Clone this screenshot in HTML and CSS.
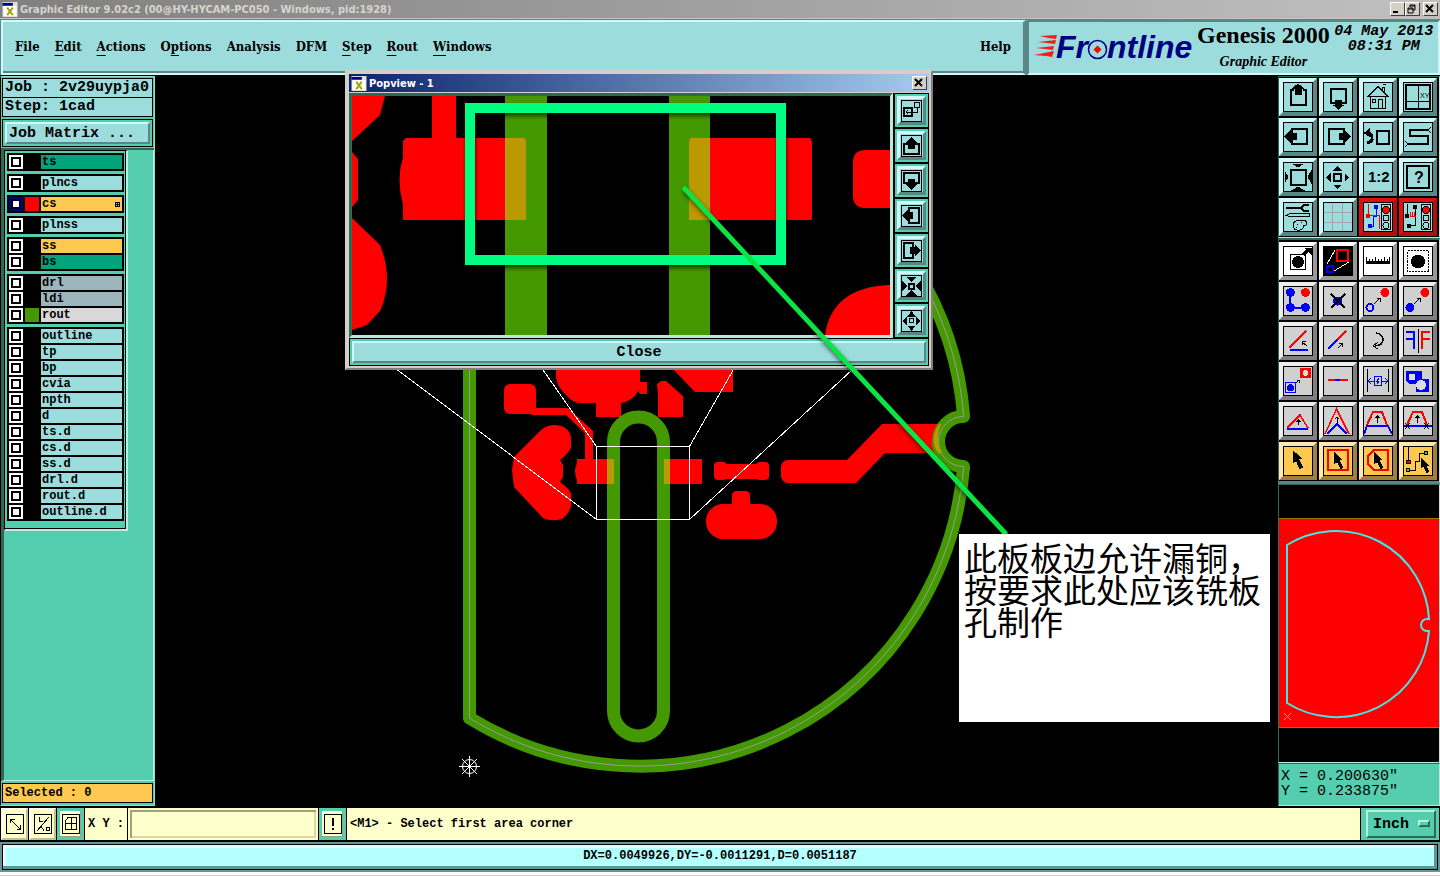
FILE: index.html
```html
<!doctype html>
<html lang="zh">
<head>
	<meta charset="UTF-8">
	<title>Graphic Editor</title>
	<link rel="stylesheet" href="styles.css">
</head>
<body>
	<!-- window title -->
	<div class="titlebar">
		<svg class="win_icon" viewBox="0 0 16 16"><rect width="16" height="16" fill="#ddd"/><rect x="1" y="4" width="14" height="11" fill="#fff"/><rect y="1" width="11" height="3" fill="#008"/><path d="M5 6l6 8M11 6l-6 8" stroke="#a8a000" stroke-width="2"/></svg>
		<span class="title_text">Graphic Editor 9.02c2 (00@HY-HYCAM-PC050 - Windows, pid:1928)</span>
		<button class="win_btn" aria-label="Minimize"><svg viewBox="0 0 11 10"><path d="M2 8h5" stroke="#000" stroke-width="2"/></svg></button>
		<button class="win_btn" aria-label="Restore"><svg viewBox="0 0 11 10"><path d="M4 3V1h5v5H7M4 2h5M2 4h5v5H2zM2 5h5" fill="none" stroke="#000"/></svg></button>
		<button class="win_btn win_close" aria-label="Close window"><svg viewBox="0 0 11 10"><path d="M2 1l7 7M9 1l-7 7" stroke="#000" stroke-width="2"/></svg></button>
	</div>

	<header class="header">
		<nav class="menubar">
			<button><u>F</u>ile</button>
			<button><u>E</u>dit</button>
			<button><u>A</u>ctions</button>
			<button>O<u>p</u>tions</button>
			<button>Analysis</button>
			<button>DFM</button>
			<button><u>S</u>tep</button>
			<button><u>R</u>out</button>
			<button><u>W</u>indows</button>
			<button class="help">Help</button>
		</nav>
		<div class="brand">
			<svg class="logo" viewBox="1031 30 162 34" width="162" height="34">
				<g fill="#f02018"><path d="M1038 36l17-1-1 4-8-1zM1036 42l18-2-1 4-8-1zM1034 48l18-2-1 4-8-1zM1032 55l20-4-2 6-6-1z"/></g>
				<g class="logo_text">
					<text x="1054" y="58">Fr</text>
					<text x="1105" y="58">ntline</text>
				</g>
				<circle cx="1095.500" cy="49.500" r="9" fill="none" stroke="#000080" stroke-width="1.500"/>
				<path d="M1095.500 45.500l4 4-4 4-4-4z" fill="#f00"/>
			</svg>
			<div class="product">
				<div class="product_name">Genesis 2000</div>
				<div class="product_sub">Graphic Editor</div>
			</div>
			<div class="clock">04 May 2013<br>08:31 PM</div>
		</div>
	</header>

	<main class="workspace">
		<aside class="sidebar">
			<div class="job_info">
				<div class="job_line">Job : 2v29uypja0</div>
				<div class="job_line">Step: 1cad</div>
				<div class="matrix_wrap"><button class="matrix">Job Matrix ...</button></div>
			</div>
			<div class="layer_area">
				<div class="layers">
					<div class="group">
						<label class="row"><input type="checkbox"><i></i><span class="green">ts</span></label>
					</div>
					<div class="group">
						<label class="row"><input type="checkbox"><i></i><span>plncs</span></label>
					</div>
					<div class="group">
						<label class="row"><input type="checkbox" checked><i class="c_red"></i><span class="orange">cs<b></b></span></label>
					</div>
					<div class="group">
						<label class="row"><input type="checkbox"><i></i><span>plnss</span></label>
					</div>
					<div class="group">
						<label class="row"><input type="checkbox"><i></i><span class="orange">ss</span></label>
						<label class="row"><input type="checkbox"><i></i><span class="green">bs</span></label>
					</div>
					<div class="group">
						<label class="row"><input type="checkbox"><i></i><span class="steel">drl</span></label>
						<label class="row"><input type="checkbox"><i></i><span class="steel">ldi</span></label>
						<label class="row"><input type="checkbox"><i class="c_green"></i><span class="gray">rout</span></label>
					</div>
					<div class="group">
						<label class="row"><input type="checkbox"><i></i><span>outline</span></label>
						<label class="row"><input type="checkbox"><i></i><span>tp</span></label>
						<label class="row"><input type="checkbox"><i></i><span>bp</span></label>
						<label class="row"><input type="checkbox"><i></i><span>cvia</span></label>
						<label class="row"><input type="checkbox"><i></i><span>npth</span></label>
						<label class="row"><input type="checkbox"><i></i><span>d</span></label>
						<label class="row"><input type="checkbox"><i></i><span>ts.d</span></label>
						<label class="row"><input type="checkbox"><i></i><span>cs.d</span></label>
						<label class="row"><input type="checkbox"><i></i><span>ss.d</span></label>
						<label class="row"><input type="checkbox"><i></i><span>drl.d</span></label>
						<label class="row"><input type="checkbox"><i></i><span>rout.d</span></label>
						<label class="row"><input type="checkbox"><i></i><span>outline.d</span></label>
					</div>
				</div>
			</div>
			<div class="selected_wrap"><div class="selected">Selected : 0</div></div>
		</aside>

		<section class="canvas">
			<!-- board drawing -->
			<svg class="board" viewBox="155 76 1121 730" width="1121" height="730">
				<g fill="#f00">
					<rect x="504" y="384" width="32" height="30" rx="6"/>
					<path d="M531 408h37l25 23v29h-8v-27l-19-18h-35z"/>
					<path d="M556 366v12q2 10 10 17 7 8 14 8h16v14h25v-14q12-2 17-12l2 3h7v-12h-7v-16z"/>
					<path d="M657 384l4-3h5l17 15v21h-25v-22z"/>
					<path d="M672 368l23 24h38v-24z"/>
					<path d="M512 470l2-13 26-26q6-6 14-6 14 0 17 12v10q-1 5-11 13l3 5v12l-3 5q10 7 11 12v12q-2 8-9 13-11 3-19-1l-29-31z"/>
					<path d="M577 459h37v25h-37v-4q-4-9 0-17z"/>
					<path d="M664 459h38v25h-38z"/>
					<path d="M714 466q0-4 4-4h6l3 2h29l3-2h6q4 0 4 4v10q0 4-4 4h-6l-3-1h-29l-3 1h-6q-4 0-4-4z"/>
					<path d="M732 506v-10q0-5 5-5h8q5 0 5 5v10z"/>
					<rect x="706" y="504" width="71" height="35" rx="17"/>
					<path d="M781 467q0-6 7-7h59l35-36h58v29h-55l-29 30h-69q-6-2-6-7z"/>
				</g>
				<g fill="none" stroke="#490" stroke-width="13" stroke-linejoin="round">
					<path d="M469.500 164V718A325 325 0 0 0 963.500 468V466.500A25 25 0 0 1 963.500 416.500V415A325 325 0 0 0 469.500 164z"/>
					<path d="M613.500 442a25 25 0 0 1 50 0V711a25 25 0 0 1-50 0z"/>
				</g>
				<path d="M469.500 164V718A325 325 0 0 0 963.500 468V466.500A25 25 0 0 1 963.500 416.500V415A325 325 0 0 0 469.500 164z" fill="none" stroke="#999"/>
				<g fill="#b90">
					<path d="M607 459h7v25h-7zM664 459h6v25h-6zM939 424q-11 16 0 30l3-2q-8-12-1-28z"/>
				</g>
				<g fill="none" stroke="#fff" shape-rendering="crispEdges">
					<path d="M596.500 446.500h93v73h-93zM351 335L596.500 519.500M351 95L596.500 446.500M890 95L689.500 446.500M890 335L689.500 519.500"/>
				</g>
				<g fill="none" stroke="#fff"><circle cx="469.500" cy="766.500" r="7"/><path d="M459 766.500h21M469.500 756v21M462 759l15 15M477 759l-15 15"/></g>
			</svg>

			<!-- Popview window -->
			<div class="popview">
				<div class="pop_title">
					<svg class="win_icon" viewBox="0 0 16 16"><rect width="16" height="16" fill="#ddd"/><rect x="1" y="4" width="14" height="11" fill="#fff"/><rect y="1" width="11" height="3" fill="#008"/><path d="M5 6l6 8M11 6l-6 8" stroke="#a8a000" stroke-width="2"/></svg>
					<span>Popview - 1</span>
					<button class="win_btn win_close" aria-label="Close popview"><svg viewBox="0 0 11 10"><path d="M2 1l7 7M9 1l-7 7" stroke="#000" stroke-width="2"/></svg></button>
				</div>
				<div class="pop_main">
					<div class="pop_view">
						<svg viewBox="352 96 538 239" width="538" height="239">
							<rect x="352" y="96" width="538" height="239"/>
							<g fill="#f00">
								<path d="M352 96h33l-5 19-28 26zM432 96h24v50h-24z"/>
								<path d="M403 141l3-3h120v82H403v-16q-7-24 0-47zM352 152l6 7v41l-6 7zM352 218l28 27q14 35 0 66l-13 14-15 5z"/>
								<path d="M689 138h121l2 3v79H689zM890 150h-26q-11 1-11 12v34q0 11 11 12h26zM825 335q7-48 65-50v50z"/>
							</g>
							<path d="M505 96h42v239h-42zM669 96h41v239h-41z" fill="#490"/>
							<path d="M505 138h19l2 3v79h-21zM710 138h-19l-2 3v79h21z" fill="#b90"/>
						</svg>
					</div>
					<div class="pop_tools">
						<button aria-label="Zoom area"><svg viewBox="0 0 21 22"><path d="M3 8h8v8H3z" stroke-width="2"/><path d="M13.500 2.500h5v5h-5zM12 12.500h4v-5M5 12.500h5M7 10l-2 2 2 2"/></svg></button>
						<button aria-label="Pan up"><svg viewBox="0 0 21 22"><path d="M7 9H3v10h15V9h-4" stroke-width="2"/><path d="M10.500 3l5 5h-2v5H7V8H5.500z" fill="#000"/></svg></button>
						<button aria-label="Pan down"><svg viewBox="0 0 21 22"><path d="M7 13H3V3h15v10h-4" stroke-width="2"/><path d="M10.500 19l5-5h-2V9H7v5H5.500z" fill="#000"/></svg></button>
						<button aria-label="Pan left"><svg viewBox="0 0 21 22"><path d="M8 7V3h10v15H8v-4" stroke-width="2"/><path d="M2 10.500l5-5v2h4v6H7v2z" fill="#000"/></svg></button>
						<button aria-label="Pan right"><svg viewBox="0 0 21 22"><path d="M12 7V3H3v15h9v-4" stroke-width="2"/><path d="M19 10.500l-5-5v2H9v6h5v2z" fill="#000"/></svg></button>
						<button aria-label="Zoom in"><svg viewBox="0 0 21 22"><path d="M8 9h5v5H8z" stroke-width="2"/><path d="M6 2h9l-4.500 4zM6 20h9l-4.500-4zM1.500 6.500v9l4-4.500zM19.500 6.500v9l-4-4.500z" fill="#000"/></svg></button>
						<button aria-label="Zoom out"><svg viewBox="0 0 21 22"><path d="M8.500 8.500h4v4h-4z"/><path d="M7 6h7l-3.500-4zM7 16h7l-3.500 4zM5.500 7.500v7L2 11zM15.500 7.500v7L19 11z" fill="#000"/></svg></button>
					</div>
				</div>
				<div class="pop_foot"><button class="pop_close">Close</button></div>
			</div>

			<!-- annotation over everything -->
			<svg class="marks" viewBox="155 76 1121 730" width="1121" height="730">
				<rect x="470" y="108" width="311" height="152" fill="none" stroke="#00ff80" stroke-width="10"/>
				<path d="M685 189L1005 533" stroke="#0be544" stroke-width="5" stroke-linecap="round"/>
			</svg>
			<div class="note">此板板边允许漏铜，按要求此处应该铣板孔制作</div>
		</section>

		<aside class="tools">
			<div class="toolbox cyan">
				<button aria-label="Pan up"><svg viewBox="0 0 30 30"><path d="M11 8H8v15h15V8h-3" stroke-width="2"/><path d="M15 2l5 4h-2v6h-6V6h-2z" fill="#000"/></svg></button>
				<button aria-label="Pan down"><svg viewBox="0 0 30 30"><path d="M12 21H8V7h15v14h-4" stroke-width="2"/><path d="M15.500 27l5-4h-2v-5h-6v5h-2z" fill="#000"/></svg></button>
				<button aria-label="Home"><svg viewBox="0 0 30 30"><path d="M5.500 14.500h19l-9.500-10z" stroke-width="1.500"/><path d="M7.500 14.500v12h15v-12M15.500 26V17.500h4V26M9.500 17.500h3v3h-3zM19.500 8V5.500h2V10M20 3l3-1"/></svg></button>
				<button aria-label="Coordinates"><svg viewBox="0 0 30 30"><path d="M3 3h24v24H3z" stroke-width="2"/><path d="M15.500 4v22M4 19.500h22"/><text x="17" y="16" class="tiny">XY</text></svg></button>
				<button aria-label="Pan left"><svg viewBox="0 0 30 30"><path d="M9 11V7h15v15H9v-4" stroke-width="2"/><path d="M2 14.500l5-5v2h6v6H7v2z" fill="#000"/></svg></button>
				<button aria-label="Pan right"><svg viewBox="0 0 30 30"><path d="M21 11V7H6v15h15v-4" stroke-width="2"/><path d="M27 14.500l-5-5v2h-6v6h6v2z" fill="#000"/></svg></button>
				<button aria-label="Previous view"><svg viewBox="0 0 30 30"><path d="M14 9h12v13H14z" stroke-width="2"/><path d="M4 21q6-1 5-6-1-4-4-4" stroke-width="3"/><path d="M1.500 11L6 7.500V14z" fill="#000"/></svg></button>
				<button aria-label="Snake"><svg viewBox="0 0 30 30"><path d="M25 8H7v6h18v8H5" stroke-width="2"/><path d="M25 8l3-3M25 8l3 3M5 22l-3-3M5 22l-3 3"/></svg></button>
				<button aria-label="Zoom in"><svg viewBox="0 0 30 30"><path d="M8 8h15v15H8z" stroke-width="2"/><path d="M10 2h10l-5 3zM10 28h10l-5-3zM2 10v10l3-5zM28 10v10l-3-5z" fill="#000"/></svg></button>
				<button aria-label="Zoom out"><svg viewBox="0 0 30 30"><path d="M11 12h7v7h-7z" stroke-width="2"/><path d="M11.500 8h6l-3-3.500zM11.500 23h6l-3 3.500zM7 12v7l-3.500-3.500zM22 12v7l3.500-3.500z" fill="#000"/></svg></button>
				<button aria-label="Scale"><svg viewBox="0 0 30 30"><text x="5" y="20" class="ratio">1:2</text></svg></button>
				<button aria-label="Query"><svg viewBox="0 0 30 30"><path d="M4 4h22v22H4z" stroke-width="2"/><text x="11" y="21" class="ask">?</text></svg></button>
				<button aria-label="Setup"><svg viewBox="0 0 30 30"><path d="M3 6h15" stroke-width="2"/><path d="M26 3h-5l-3 3 3 3h5" stroke-width="2"/><path d="M3 13.500l4-2h19v3H7z"/><path d="M10 23q1-5 8-5 6 0 6 4-1 2-4 2 1 3-3 4-7 1-7-5zM14 22h1M18 20h1M13 25h1"/></svg></button>
				<button aria-label="Grid"><svg viewBox="0 0 30 30"><path d="M9.500 1v28M19.500 1v28M1 10.500h28M1 20.500h28" stroke="#a5a5a5"/></svg></button>
				<button class="red_frame" aria-label="Net on"><svg viewBox="0 0 30 30"><path d="M5.500 2v11.500h11M16.500 13v14" stroke="#f00"/><path d="M13.500 5v9h-3v10H7" stroke="#00f"/><circle cx="5" cy="14" r="2.500" fill="#f00" stroke="none"/><circle cx="13" cy="5" r="2.500" fill="#00f" stroke="none"/><circle cx="7" cy="24" r="2.500" fill="#00f" stroke="none"/><path d="M18.500 2.500h9v25h-9z"/><circle cx="23" cy="8" r="3.500" fill="#f00"/><circle cx="23" cy="16" r="3"/><circle cx="23" cy="23.500" r="3"/></svg></button>
				<button class="red_frame" aria-label="Net off"><svg viewBox="0 0 30 30"><path d="M4.500 2v11.500M12.500 5v18.500H7"/><path d="M7.500 14v-4M9.500 14v-4M11.500 14v-4M7 14h6" stroke="#f00"/><circle cx="4" cy="14" r="2.500" fill="#000" stroke="none"/><circle cx="12" cy="5" r="2.500" fill="#000" stroke="none"/><circle cx="6" cy="24" r="2.500" fill="#000" stroke="none"/><path d="M18.500 2.500h9v25h-9z"/><circle cx="23" cy="8" r="3.500" fill="#f00"/><circle cx="23" cy="16" r="3"/><circle cx="23" cy="23.500" r="3"/></svg></button>
			</div>
			<div class="toolbox silver">
				<button class="white" aria-label="Feature"><svg viewBox="0 0 30 30"><path d="M7.500 8.500h15v15h-15z"/><circle cx="15" cy="16" r="6" fill="#000" stroke="none"/><path d="M20 9l5-5" stroke-width="3"/><path d="M22 2h6v6z" fill="#000"/></svg></button>
				<button class="white" aria-label="Popview"><svg viewBox="0 0 30 30"><rect x="1" y="1" width="28" height="28" fill="#000"/><path d="M14 4h11v11H14z" stroke="#f00" stroke-width="2"/><path d="M4 20h6v6H4z" stroke="#00f" stroke-width="2"/><path d="M12 4L4 18M26 16l-15 9" stroke="#fff"/></svg></button>
				<button class="white" aria-label="Measure"><svg viewBox="0 0 30 30"><path d="M3 16.500h24" stroke-width="3"/><path d="M3.500 11v5M6.500 13v3M9.500 13v3M12.500 11v5M15.500 13v3M18.500 13v3M21.500 11v5M24.500 13v3M26.500 11v5"/></svg></button>
				<button class="white" aria-label="Select feature"><svg viewBox="0 0 30 30"><path d="M4.500 4.500h21v21h-21z" stroke-dasharray="2 1"/><circle cx="15" cy="15.500" r="7" fill="#000" stroke="none"/></svg></button>
				<button aria-label="Add pads"><svg viewBox="0 0 30 30"><path d="M7 6.500V22h15" stroke="#00f" stroke-width="2"/><g fill="#00f" stroke="none"><circle cx="7.500" cy="6.500" r="4.500"/><circle cx="7.500" cy="21.500" r="4.500"/><circle cx="22.500" cy="21.500" r="4.500"/></g><circle cx="22.500" cy="6.500" r="4.500" fill="#f00" stroke="none"/></svg></button>
				<button aria-label="Delete"><svg viewBox="0 0 30 30"><circle cx="14.500" cy="15" r="4.500" fill="#00f" stroke="none"/><path d="M8 8l14 14M22 8L8 22" stroke-width="2"/></svg></button>
				<button aria-label="Copy"><svg viewBox="0 0 30 30"><circle cx="7" cy="21.500" r="3.500" stroke="#00f" stroke-width="2"/><circle cx="22" cy="6.500" r="4.500" fill="#f00" stroke="none"/><path d="M11 18l6-6M14 12.500h3.500v3.500"/></svg></button>
				<button aria-label="Move"><svg viewBox="0 0 30 30"><circle cx="7" cy="21.500" r="4.500" fill="#00f" stroke="none"/><circle cx="22" cy="6.500" r="4.500" fill="#f00" stroke="none"/><path d="M11 18l6-6M14 12.500h3.500v3.500"/></svg></button>
				<button aria-label="Rotate"><svg viewBox="0 0 30 30"><path d="M23 5L6 22" stroke="#f00" stroke-width="2"/><path d="M7 24h18" stroke="#00f" stroke-width="2"/><path d="M24 20l-5-4M19.500 19v-3.500h3.500"/></svg></button>
				<button aria-label="Extend line"><svg viewBox="0 0 30 30"><path d="M23 5l-9 9" stroke="#f00" stroke-width="2"/><path d="M14 14l-9 9" stroke="#00f" stroke-width="2"/><path d="M15 22l4-4M16 17.500h3.500v3.500"/></svg></button>
				<button aria-label="Turn"><svg viewBox="0 0 30 30"><path d="M13 7q7 1 7 7 0 5-8 6" stroke-width="1.500"/><path d="M15 16l-5 4 5 3"/></svg></button>
				<button aria-label="Mirror"><svg viewBox="0 0 30 30"><path d="M3 6h8v17M3 13h8" stroke="#00f" stroke-width="2"/><path d="M27 6h-8v17M27 13h-8" stroke="#f00" stroke-width="2"/><path d="M15.500 3v24"/></svg></button>
				<button aria-label="Substitute"><svg viewBox="0 0 30 30"><rect x="17" y="2" width="11" height="10" fill="#f00" stroke="none"/><circle cx="22.500" cy="7" r="3" fill="#ddd" stroke="none"/><path d="M2.500 16.500h10v10h-10z" stroke="#00f"/><circle cx="7.500" cy="21.500" r="3.500" fill="#00f" stroke="none"/><path d="M13 17l3-3M14 14.500h2.500v2.500"/></svg></button>
				<button aria-label="Join"><svg viewBox="0 0 30 30"><path d="M5 14h20" stroke="#f00" stroke-width="2"/><path d="M12 14h5" stroke="#00f" stroke-width="2"/></svg></button>
				<button aria-label="Spacing"><svg viewBox="0 0 30 30"><path d="M4.500 3v23M25.500 3v23"/><path d="M11.500 10.500h7v9h-7zM6 15.500h5M19 15.500h5M8 12l-3 3 3 3M22 12l3 3-3 3M16 12l-2 3h2l-2 3" stroke="#00f"/></svg></button>
				<button aria-label="Contourize"><svg viewBox="0 0 30 30"><path d="M3 5h16v8h7v13H13v-8H6l-3-3z" fill="#00f" stroke="none"/><circle cx="9" cy="11" r="3.500" fill="#ddd" stroke="none"/><circle cx="18" cy="19" r="5" fill="#ddd" stroke="none"/></svg></button>
				<button aria-label="Stretch one"><svg viewBox="0 0 30 30"><path d="M4 22L17 9l8 13" stroke="#f00" stroke-width="1.500"/><path d="M4 23h21" stroke="#00f" stroke-width="2"/><path d="M15.500 19v-5M13.500 16l2-2 2 2"/></svg></button>
				<button aria-label="Stretch two"><svg viewBox="0 0 30 30"><path d="M2 28L13.500 3 26 28" stroke="#f00" stroke-width="1.500"/><path d="M4 28l10-10 10 10" stroke="#00f" stroke-width="2"/><path d="M14.500 17v-6M12 13l2-2 2 2"/></svg></button>
				<button aria-label="Stretch three"><svg viewBox="0 0 30 30"><path d="M4 19L10 6h9l5 13" stroke="#f00" stroke-width="2"/><path d="M1 28l3-8h21l4 8" stroke="#00f" stroke-width="2"/><path d="M14.500 17v-7M12.500 12l2-2 2 2"/></svg></button>
				<button aria-label="Stretch four"><svg viewBox="0 0 30 30"><path d="M4 19L10 6h9l5 13" stroke="#f00" stroke-width="2"/><path d="M1 20h28" stroke="#00f" stroke-width="2"/><path d="M14.500 17v-7M12.500 12l2-2 2 2M2 17l5 6M7 17l-5 6M21 17l5 6M26 17l-5 6"/></svg></button>
				<button class="gold" aria-label="Select"><svg viewBox="0 0 30 30"><path d="M10.500 5.500l8 7h-3l4 9-3 1-3-8-3 2z" fill="#000"/></svg></button>
				<button class="gold" aria-label="Select by frame"><svg viewBox="0 0 30 30"><path d="M5 4h20v20H5z" stroke="#f00" stroke-width="2"/><path d="M11.500 6.500l7 7h-3l4 8-2 1-3-7-3 2z" fill="#000"/></svg></button>
				<button class="gold" aria-label="Select by polygon"><svg viewBox="0 0 30 30"><path d="M11 4h14v20H11l-6-6V10z" stroke="#f00" stroke-width="2"/><path d="M11.500 6.500l7 7h-3l4 8-2 1-3-7-3 2z" fill="#000"/></svg></button>
				<button class="gold" aria-label="Select net"><svg viewBox="0 0 30 30"><path d="M5.500 1v13M5 24.500h7.500v-9h4v-8H23"/><circle cx="5.500" cy="16" r="2" fill="#f00"/><circle cx="5" cy="24" r="2" fill="#0f0"/><circle cx="23" cy="7" r="2" fill="#0f0"/><path d="M18.500 12.500l7 7h-3l3 6-2 1-3-7-2 2z" fill="#000"/></svg></button>
			</div>
			<div class="overview">
				<svg viewBox="1279 484 160 277" width="160" height="277">
					<rect x="1279" y="484" width="160" height="277"/>
					<rect x="1278.500" y="517.500" width="161" height="209" fill="#f00" stroke="#970"/>
					<path d="M1287 544V702A93 93 0 0 0 1429 630h-2a6 6 0 0 1 0-12h2A93 93 0 0 0 1287 544z" fill="none" stroke="#40e8e8" stroke-width="2"/>
					<path d="M1284 712l7 7M1291 712l-7 7" stroke="#d99"/>
				</svg>
			</div>
			<div class="coords">X = 0.200630"<br>Y = 0.233875"</div>
		</aside>
	</main>

	<form class="entry">
		<button type="button" class="mini" aria-label="Angle"><svg viewBox="0 0 18 20"><path d="M.500.500h17v19H.500zM4 5l10 10M4.500 9V5.500h4M14.500 11v4.500h-4"/></svg></button>
		<button type="button" class="mini" aria-label="Ortho"><svg viewBox="0 0 18 20"><path d="M.500.500h17v19H.500zM3 17L15 3M5.500 3v4h3M7 12l3 5M12.500 13.500h3v3h-3z"/></svg></button>
		<button type="button" class="mini teal" aria-label="Snap"><svg viewBox="0 0 18 20"><path d="M.500.500h17v19H.500zM6 3.500h8.500v12h-11V7zM9.500 4v12M3 9.500h12"/></svg></button>
		<label for="xy">X Y :</label>
		<input id="xy" type="text">
		<button type="button" class="mini teal" aria-label="Alert"><svg viewBox="0 0 18 20"><path d="M.500.500h17v19H.500z"/><path d="M9 4v8M9 14v2" stroke-width="2"/></svg></button>
		<div class="message">&lt;M1&gt; - Select first area corner</div>
		<div class="units">
			<select aria-label="Units"><option>Inch</option><option>MM</option></select>
		</div>
	</form>
	<footer class="status"><div>DX=0.0049926,DY=-0.0011291,D=0.0051187</div></footer>
</body>
</html>
```
FILE: styles.css
```css
*{box-sizing:border-box}
body{
	margin:0;
	min-height:100vh;
	display:flex;
	flex-direction:column;
	background:#d4d0c8;
	color:#000;
	font:bold 12px "Liberation Mono",monospace;
}
button{
	margin:0;
	padding:0;
	border:0;
	background:none;
	color:inherit;
	font:inherit;
}
svg{display:block}

/* 标题栏 */
.titlebar{
	height:19px;
	display:flex;
	align-items:center;
	padding:0 2px;
	background:linear-gradient(90deg,#808080,#c0c0c0);
	border-bottom:1px solid #c8c4bc;
	color:#d8d4cc;
}
.title_text,.pop_title span{
	flex:1;
	padding-left:2px;
	font:bold 11px "DejaVu Sans Condensed","DejaVu Sans",sans-serif;
}
.win_icon{width:16px;height:15px}
.win_btn{
	width:15px;
	height:14px;
	background:#d4d0c8;
	border:1px solid;
	border-color:#fff #404040 #404040 #fff;
}
.win_btn svg{width:11px;height:10px}
.win_close{margin-left:3px}

/* 菜单 */
.header{
	height:57px;
	display:flex;
	background:#5a8686;
	border-bottom:1px solid #000;
	padding:1px 0 0 1px;
}
.menubar,.brand{
	background:#9cdcdc;
	border:2px solid;
	border-color:#d0fafa #5a8686 #d0fafa #d0fafa;
}
.menubar{
	flex:1;
	display:flex;
	align-items:center;
	gap:15px;
	padding:0 12px 2px;
	border-right-width:3px;
	box-shadow:inset 0 -2px #5a8686;
}
.menubar button{font:bold 13px "DejaVu Serif Condensed","DejaVu Serif",serif}
.menubar u{text-underline-offset:4px}
.menubar .help{margin-left:auto}
.brand{
	width:413px;
	margin-left:1px;
	display:flex;
	align-items:flex-start;
	border-color:#5a8686 #d0fafa #d0fafa #5a8686;
}
.logo{margin:8px 2px 0 4px}
.product{text-align:center}
.logo_text{
	fill:#000080;
	font:italic bold 32px "Liberation Sans",sans-serif;
}
.product_name{font:bold 24px/27px "Liberation Serif",serif}
.product_sub{font:italic bold 14px/25px "Liberation Serif",serif}
.clock{
	flex:1;
	padding-top:2px;
	text-align:center;
	font:italic bold 15px/15px "Liberation Mono",monospace;
	white-space:nowrap;
}

/* 主区域 */
.workspace{
	flex:1;
	display:grid;
	grid-template-columns:155px minmax(0,1fr) 164px;
	background:#000;
}
.sidebar{
	display:flex;
	flex-direction:column;
	background:#55ceb0;
	border:1px solid #8ce0cc;
	border-left-color:#000;
	margin-bottom:1px;
}
.job_info{
	padding:1px;
	font-size:15px;
	border-bottom:2px solid #306858;
}
.job_line,.matrix_wrap{
	background:#9cdcdc;
	border:1px solid #000;
}
.job_line{
	height:20px;
	line-height:17px;
	padding-left:2px;
	white-space:nowrap;
}
.job_line + .job_line{margin-top:-1px}
.matrix_wrap{
	margin-top:2px;
	padding:2px;
	background:#55ceb0;
}
.matrix{
	display:block;
	width:100%;
	height:22px;
	padding-left:2px;
	text-align:left;
	background:#9cdcdc;
	border:2px solid;
	border-color:#d0fafa #5a8686 #5a8686 #d0fafa;
}
.layer_area{
	flex:1;
	border-left:3px solid #306858;
	border-right:1px solid #b8f0e0;
	border-bottom:1px solid #b8f0e0;
}
.layers{
	width:124px;
	height:381px;
	padding:2px;
	border:1px solid #000;
	border-width:1px 2px 2px 1px;
	border-color:#000 #b8f0e0 #b8f0e0 #000;
	box-shadow:inset -1px -1px #000;
	display:flex;
	flex-direction:column;
	gap:3px;
}
.group{
	width:117px;
	padding:2px;
	background:#000;
	display:flex;
	flex-direction:column;
	gap:2px;
}
.row{
	height:14px;
	display:flex;
	gap:2px;
}
.row input{
	appearance:none;
	width:14px;
	height:14px;
	margin:0;
	background:#fff;
	border:2px solid #fff;
	box-shadow:inset 0 0 0 2px #000;
}
.row input:checked{
	border-color:#008;
	box-shadow:inset 0 0 0 2px #002;
}
.row i{width:14px}
.row span{
	flex:1;
	display:flex;
	align-items:center;
	justify-content:space-between;
	padding:0 2px 0 1px;
	line-height:13px;
	background:#9cdcdc;
}
.row .green{background:#00a47c}
.row .orange{background:#ffc850}
.row .steel{background:#9cb4bc}
.row .gray{background:#d8d8d8}
.row .c_red{background:#f00}
.row .c_green{background:#490}
/* 层名后的小方格 */
.row b{
	width:5px;
	height:5px;
	border:1px solid #000;
	background:linear-gradient(#000,#000) 1px 0/1px 3px no-repeat,linear-gradient(#000,#000) 0 1px/3px 1px no-repeat;
}
.selected_wrap{padding:2px 1px}
.selected{
	height:20px;
	padding-left:2px;
	line-height:18px;
	background:#ffc850;
	border:1px solid #000;
}

/* 画布 */
.canvas{
	position:relative;
	overflow:visible;
	background:#000;
}
.marks{
	position:absolute;
	left:0;
	top:0;
	pointer-events:none;
	filter:drop-shadow(1px 3px 2px rgba(0,0,0,.6));
}
.note{
	position:absolute;
	left:804px;
	top:458px;
	width:311px;
	height:188px;
	padding:7px 5px;
	background:#fff;
	font:33px/32px "Noto Sans CJK SC",sans-serif;
	word-break:break-all;
}

/* 弹出窗口 */
.popview{
	position:absolute;
	left:190px;
	top:-6px;
	width:588px;
	padding:2px;
	background:#000;
	border:2px solid;
	border-color:#d4d0c8 #808080 #808080 #d4d0c8;
	box-shadow:inset 0 0 0 2px #d4d0c8;
}
.pop_title{
	height:19px;
	display:flex;
	align-items:center;
	padding:0 2px;
	background:linear-gradient(90deg,#0a246a,#a6caf0);
	border-bottom:1px solid #d4d0c8;
	color:#fff;
}
.pop_main{
	display:flex;
	justify-content:space-between;
}
.pop_view{
	border:3px solid;
	border-color:#306858 #b8e8e0 #b8e8e0 #306858;
}
.pop_tools{
	display:flex;
	flex-direction:column;
	gap:2px;
	padding:1px 1px 0;
}
.pop_tools button,.toolbox button,.mini{
	display:flex;
	align-items:center;
	justify-content:center;
	background:#9cdcdc;
	border:3px solid;
	border-color:#d0fafa #5a8686 #5a8686 #d0fafa;
}
.pop_tools button{
	width:33px;
	height:33px;
	outline:2px solid #55ceb0;
	outline-offset:-2px;
	border-width:5px;
}
.pop_tools svg{
	width:21px;
	height:22px;
	outline:1px solid #000;
	outline-offset:-1px;
}
.pop_tools svg,.toolbox svg,.mini svg{
	flex:none;
	fill:none;
	stroke:#000;
	shape-rendering:crispEdges;
}
.pop_foot{
	padding:2px;
	background:#55ceb0;
	border:1px solid #000;
}
.pop_close{
	display:block;
	width:100%;
	height:22px;
	background:#9cdcdc;
	border:2px solid;
	border-color:#d0fafa #5a8686 #5a8686 #d0fafa;
	font-size:15px;
}

/* 工具箱 */
.tools{
	display:flex;
	flex-direction:column;
	padding-left:1px;
	border-left:1px solid #000;
}
.toolbox{
	display:grid;
	grid-template-columns:repeat(4,38px);
	grid-auto-rows:38px;
	gap:2px;
	padding:1px 0;
	border:1px solid;
	border-color:#306858 #b8e8e0 #b8e8e0 #306858;
}
.toolbox button{border-width:4px}
.toolbox svg{
	width:30px;
	height:30px;
	outline:1px solid #000;
	outline-offset:-1px;
}
.toolbox text{
	fill:#000;
	stroke:none;
}
.tiny{font:7px "Liberation Sans",sans-serif}
.ratio{font:bold 15px "Liberation Sans",sans-serif}
.ask{font:bold 16px "Liberation Sans",sans-serif}
.silver{
	padding-top:2px;
	border-top-width:2px;
	border-bottom:3px solid #5a8686;
}
.silver button{
	background:#d0d0d0;
	border-color:#eee #808080 #808080 #eee;
}
.toolbox .white{
	background:#fff;
	border-color:#fff #999 #999 #fff;
}
.toolbox .gold{
	background:#ffc850;
	border-color:#ffe8b0 #a08040 #a08040 #ffe8b0;
}
.toolbox .red_frame{border-color:#e01010 #b01010 #b01010 #e01010}
.overview{
	flex:1;
	overflow:hidden;
	border:1px solid;
	border-color:#306858 #b8e8e0 #b8e8e0 #306858;
}
.coords{
	height:43px;
	padding:5px 2px;
	margin-bottom:1px;
	background:#55ceb0;
	border:1px solid;
	border-color:#306858 #b8e8e0 #b8e8e0 #306858;
	font:15px/15px "Liberation Mono",monospace;
}

/* 底部输入栏 */
.entry{
	height:35px;
	display:flex;
	gap:1px;
	padding:1px 1px 2px;
	background:#000;
}
.entry label,.message{
	background:#ffffcc;
	line-height:32px;
}
.entry label{
	width:42px;
	padding-left:3px;
}
.entry input{
	width:190px;
	padding:0 4px;
	background:#ffffcc;
	border:2px solid #ffffcc;
	box-shadow:inset 2px 2px #a0a080,inset -2px -2px #d8d8a8;
	outline:0;
	font:inherit;
}
.mini{
	width:27px;
	background:#ffffcc;
	border:2px solid;
	border-color:#fffff0 #c0c090 #c0c090 #fffff0;
}
.mini svg{width:18px;height:20px}
.teal{
	border:3px solid #55ceb0;
	box-shadow:inset -1px -1px #a0a080;
}
.message{
	flex:1;
	padding-left:3px;
}
.units{
	position:relative;
	padding:2px 3px 2px 5px;
	background:#55ceb0;
}
.units select{
	appearance:none;
	width:70px;
	height:28px;
	padding:0 5px;
	background:#55ceb0;
	border:2px solid;
	border-color:#b8f0e0 #306858 #306858 #b8f0e0;
	border-radius:0;
	color:#000;
	font:bold 15px "Liberation Mono",monospace;
}
.units::after{
	content:"";
	position:absolute;
	right:9px;
	top:12px;
	width:8px;
	height:3px;
	border:2px solid;
	border-color:#b8f0e0 #306858 #306858 #b8f0e0;
	pointer-events:none;
}

/* 状态栏 */
.status{
	padding:2px;
	background:#6a9494;
	border-bottom:3px solid #fff;
	margin-bottom:2px;
}
.status div{
	height:26px;
	line-height:22px;
	text-align:center;
	background:#b4ffff;
	border:1px solid #000;
	box-shadow:inset -3px -3px #5a9898,inset 3px 3px #dff;
}
```
